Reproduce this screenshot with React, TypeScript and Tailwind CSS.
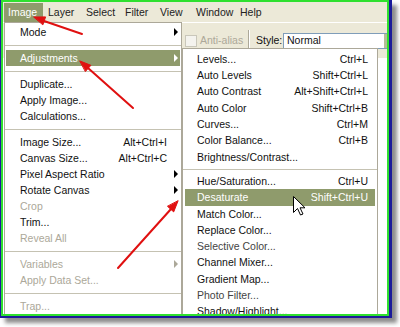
import React from "react";

type Entry =
  | { label: string; shortcut?: string; sub?: boolean; disabled?: boolean; active?: boolean; dim?: boolean }
  | "sep";

const imageMenu: Entry[] = [
  { label: "Mode", sub: true },
  "sep",
  { label: "Adjustments", sub: true, active: true },
  "sep",
  { label: "Duplicate..." },
  { label: "Apply Image..." },
  { label: "Calculations..." },
  "sep",
  { label: "Image Size...", shortcut: "Alt+Ctrl+I" },
  { label: "Canvas Size...", shortcut: "Alt+Ctrl+C" },
  { label: "Pixel Aspect Ratio", sub: true },
  { label: "Rotate Canvas", sub: true },
  { label: "Crop", disabled: true },
  { label: "Trim..." },
  { label: "Reveal All", disabled: true },
  "sep",
  { label: "Variables", sub: true, disabled: true },
  { label: "Apply Data Set...", disabled: true },
  "sep",
  { label: "Trap...", disabled: true },
];

const adjustMenu: Entry[] = [
  { label: "Levels...", shortcut: "Ctrl+L" },
  { label: "Auto Levels", shortcut: "Shift+Ctrl+L" },
  { label: "Auto Contrast", shortcut: "Alt+Shift+Ctrl+L" },
  { label: "Auto Color", shortcut: "Shift+Ctrl+B" },
  { label: "Curves...", shortcut: "Ctrl+M" },
  { label: "Color Balance...", shortcut: "Ctrl+B" },
  { label: "Brightness/Contrast..." },
  "sep",
  { label: "Hue/Saturation...", shortcut: "Ctrl+U" },
  { label: "Desaturate", shortcut: "Shift+Ctrl+U", active: true },
  { label: "Match Color..." },
  { label: "Replace Color..." },
  { label: "Selective Color...", dim: true },
  { label: "Channel Mixer..." },
  { label: "Gradient Map..." },
  { label: "Photo Filter...", dim: true },
  { label: "Shadow/Highlight..." },
];

const bar = [
  { label: "Image", w: "w-[39px]", active: true },
  { label: "Layer", w: "w-[38px]" },
  { label: "Select", w: "w-[39px]" },
  { label: "Filter", w: "w-[35px]" },
  { label: "View", w: "w-[36px]" },
  { label: "Window", w: "w-[44px]" },
  { label: "Help", w: "w-[40px]" },
];

function Arrow({ color }: { color: string }) {
  return <div className={`w-0 h-0 border-y-[4px] border-y-transparent border-l-[4px] ${color}`} />;
}

function MainMenu() {
  return (
    <div className="absolute left-[1px] top-[20px] w-[178px] h-[320px] bg-white border border-[#aca899] pt-[1px]">
      {imageMenu.map((e, i) =>
        e === "sep" ? (
          <div key={i} className="h-[10px] flex items-center">
            <div className="h-px w-full bg-[#c5c2b2]" />
          </div>
        ) : (
          <div
            key={i}
            className={`h-[16px] mx-[1px] flex items-center ${e.active ? "bg-[#8f9b6c] text-white" : e.disabled ? "text-[#aca899]" : "text-[#111]"}`}
          >
            <span className="pl-[14px] flex-1 whitespace-nowrap">{e.label}</span>
            {e.shortcut && <span className="whitespace-nowrap">{e.shortcut}</span>}
            <div className="w-[13px] flex justify-end pr-[2px]">
              {e.sub && (
                <Arrow
                  color={e.active ? "border-l-white" : e.disabled ? "border-l-[#aca899]" : "border-l-black"}
                />
              )}
            </div>
          </div>
        )
      )}
    </div>
  );
}

function AdjustMenu() {
  return (
    <div className="absolute left-[179px] top-[46px] w-[196px] h-[300px] bg-white border border-[#aca899] pt-[2px]">
      {adjustMenu.map((e, i) =>
        e === "sep" ? (
          <div key={i} className="h-[8px] flex items-center">
            <div className="h-px w-full bg-[#c5c2b2]" />
          </div>
        ) : (
          <div
            key={i}
            className={`h-[16.3px] mx-[2px] flex items-center pl-[12px] pr-[7px] ${e.active ? "bg-[#8f9b6c] text-white" : e.dim ? "text-[#444]" : "text-[#111]"}`}
          >
            <span className="flex-1 whitespace-nowrap">{e.label}</span>
            {e.shortcut && <span className="whitespace-nowrap">{e.shortcut}</span>}
          </div>
        )
      )}
    </div>
  );
}

export default function App() {
  return (
    <div className="relative w-[400px] h-[327px] bg-white text-[10.5px] leading-none [font-family:'Liberation_Sans',Arial,sans-serif]">
      <div className="w-[392px] h-[318px] border-l border-r-[3px] border-b-[2px] border-t-0 border-[#1b1b9a] shadow-[5px_5px_4px_rgba(0,0,0,0.45)]">
        <div className="relative h-full border-2 border-[#2fe02f] overflow-hidden bg-white flex flex-col">
          {/* menu bar */}
          <div className="h-[20px] bg-[#ece9d8] flex pl-[1px] pt-[1px]">
            {bar.map((b) => (
              <div
                key={b.label}
                className={`${b.w} shrink-0 h-[19px] flex items-center ${b.active ? "bg-[#8f9b6c] text-white pl-[4px]" : "text-[#222] pl-[5px]"}`}
              >
                {b.label}
              </div>
            ))}
          </div>

          {/* options bar */}
          <div className="h-[36px] bg-[#ece9d8] border-t border-white flex items-center pl-[182px]">
            <div className="w-[12px] h-[12px] shrink-0 border border-[#c9c7ba] bg-[#f4f3ee]" />
            <span className="ml-[3px] w-[48px] shrink-0 text-[#aca899] whitespace-nowrap">Anti-alias</span>
            <div className="w-[2px] h-[22px] shrink-0 border-l border-[#aca899] border-r border-r-white" />
            <span className="ml-[6px] w-[27px] shrink-0 text-[#111]">Style:</span>
            <div className="w-[120px] h-[16px] shrink-0 bg-white border border-[#7f9db9] flex items-center">
              <span className="flex-1 pl-[3px] text-[#111]">Normal</span>
              <div className="w-[18px] h-full bg-[#b4bd98]" />
            </div>
          </div>

          <div className="flex-1 bg-white" />

          <MainMenu />
          <AdjustMenu />
        </div>
      </div>

      <svg className="absolute inset-0 pointer-events-none" width="400" height="327" viewBox="0 0 400 327">
        <g stroke="#e01010" strokeWidth="2" strokeLinecap="round" fill="#e01010">
          <line x1="82" y1="34" x2="44" y2="21" />
          <polygon points="34,17 45.6,16.9 43,24.5" strokeWidth="1" />
          <line x1="133" y1="108" x2="88" y2="68" />
          <polygon points="80,61 90.9,65.3 85.6,71.3" strokeWidth="1" />
          <line x1="118" y1="268" x2="171" y2="209" />
          <polygon points="178,201 173.7,211.9 167.7,206.5" strokeWidth="1" />
        </g>
        <path
          d="M293.5 196.5 L293.5 212.5 L297.5 208.5 L300.5 215 L303 214 L300 207.8 L305 207.8 Z"
          fill="#fff"
          stroke="#000"
          strokeWidth="1"
          strokeLinejoin="round"
        />
      </svg>
    </div>
  );
}
